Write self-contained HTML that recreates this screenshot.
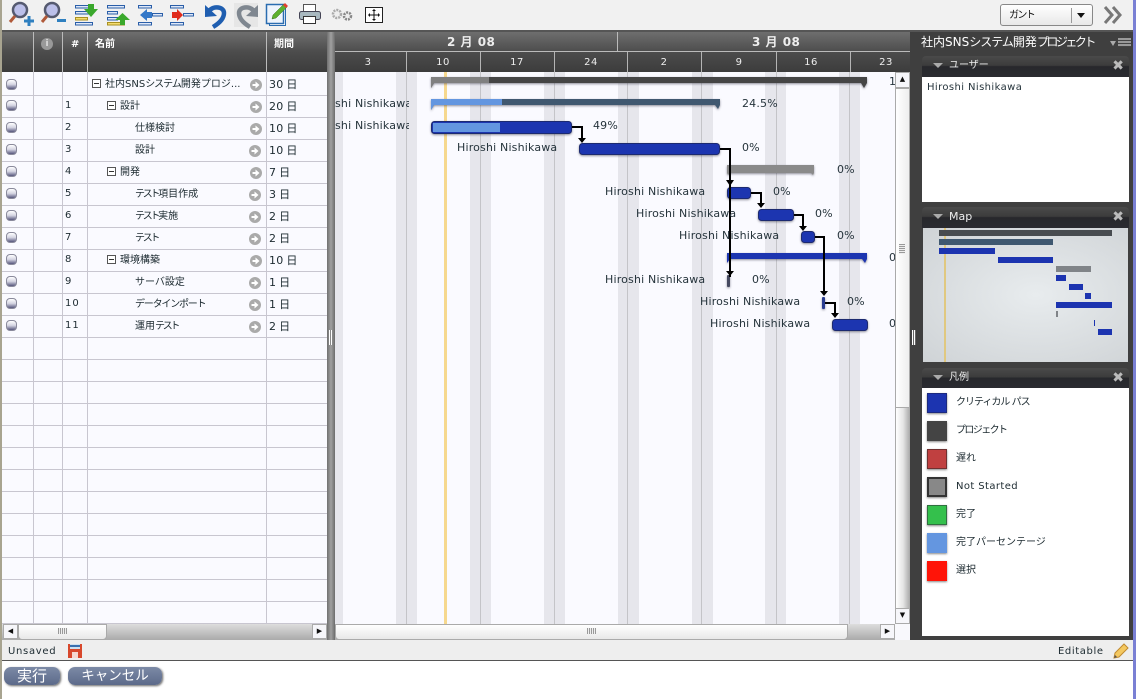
<!DOCTYPE html>
<html lang="ja"><head><meta charset="utf-8"><title>Gantt</title>
<style>
html,body{margin:0;padding:0;background:#fff}
#p{position:relative;width:1136px;height:699px;overflow:hidden;background:#fff;font-family:"DejaVu Sans","WenQuanYi Zen Hei","Noto Sans CJK JP",sans-serif;font-size:10px;color:#1c2a30}
#p div{position:absolute;white-space:nowrap}
.h{background:linear-gradient(#6e6e6e,#4c4c4c 50%,#3c3c3c);}
.t{height:14px;line-height:14px}
.hd{color:#fff;font-weight:bold;top:38px;height:14px;line-height:14px;font-size:10px}
.r{left:2px;width:325px;height:1px;background:#c8c6d0}
.v{top:72px;height:552px;width:1px;background:#c8c6d0}
.s{top:72px;height:552px;width:21px;background:#e6e6ec}
.l{top:72px;height:552px;width:1px;background:#c4c4c8}
.d{top:52px;height:20px;width:1px;background:#b4b4b4}
.dn{top:56px;height:14px;line-height:14px;color:#eee;font-size:10px;width:30px;text-align:center;letter-spacing:.5px}
.rb{left:6px;width:11px;height:11px;border-radius:4px;background:linear-gradient(#fff,#d4d4e2 50%,#56567c);border:1px solid #8a8a9c;box-sizing:border-box}
.ar{left:250px;width:12px;height:12px}
.n{left:65px;font-size:10px;letter-spacing:1px;margin-top:1px}
.nm{font-size:10px;margin-top:1px}
.du{left:269px;font-size:11px;letter-spacing:.3px;word-spacing:-1px;margin-top:1px}
.bx{width:9px;height:9px;border:1px solid #555;box-sizing:border-box;background:#fff}
.bx:after{content:"";position:absolute;left:1px;top:3px;width:5px;height:1px;background:#333}
.lb{font-size:11px;color:#26343c;height:14px;line-height:14px;letter-spacing:.18px;margin-top:1px}
.ph{left:922px;width:207px;height:21px;background:linear-gradient(#4a4a4a,#3c3c3c 45%,#27282c 50%,#2a2b30);border-radius:4px 4px 0 0;color:#eee;font-size:10px;line-height:20px}
.tri{left:11px;top:7px;width:0;height:0;border-left:5px solid transparent;border-right:5px solid transparent;border-top:5px solid #aaa}
.x{right:5px;top:1px;color:#bbb;font-size:14px;font-weight:bold;line-height:18px}
.sw{left:927px;width:20px;height:20px;box-sizing:border-box;box-shadow:0 1px 2px #888}
.lg{left:956px;font-size:10px;height:14px;line-height:14px;margin-top:2px}
.m{height:6px}
.sbb{height:16px;top:624px;background:linear-gradient(#fff,#e4e4e4 45%,#a4a4a4)}
.ab{width:15px;height:15px;background:#f6f6fa;border:1px solid #aaa;box-sizing:border-box;font-size:7px;line-height:13px;text-align:center;color:#111}
.btn{top:667px;height:18px;background:linear-gradient(#7c8aa6,#5c6a8a);border-radius:7px;color:#fff;line-height:18px;text-align:center;box-shadow:1px 1px 2px #666}
.k{letter-spacing:-2.3px}
.k1{letter-spacing:-1.6px}
</style></head><body><div id="p">

<div style="left:0;top:0;width:1133px;height:31px;background:#f1f1f1"></div>
<div style="left:0;top:30px;width:1133px;height:2px;background:#555"></div>
<div style="left:0;top:0;width:2px;height:699px;background:#a8a490"></div>
<div style="left:1133px;top:0;width:3px;height:699px;background:#7a80d4"></div>

<svg style="position:absolute;left:0;top:0" width="400" height="30" viewBox="0 0 400 30">
 <g fill="none">
  <circle cx="20" cy="10" r="7" fill="#bcc0ea" stroke="#555a70" stroke-width="2.500"/><path d="M15 16L10 22" stroke="#b05a3a" stroke-width="3"/><path d="M24 21h10M29 16v10" stroke="#2f80c0" stroke-width="3"/>
  <circle cx="52" cy="10" r="7" fill="#bcc0ea" stroke="#555a70" stroke-width="2.500"/><path d="M47 16L42 22" stroke="#b05a3a" stroke-width="3"/><path d="M57 20.500h9" stroke="#2f80c0" stroke-width="3"/>
 </g>
 <g fill="#dfe8f8" stroke="#2a5ea8">
  <rect x="75.500" y="5.500" width="17" height="2.500"/><rect x="75.500" y="11.500" width="17" height="2.500"/><rect x="75.500" y="17.500" width="12" height="2.500" fill="#f4dc70" stroke="#a89020"/><rect x="75.500" y="22.500" width="17" height="2.500"/>
  <rect x="107.500" y="5.500" width="17" height="2.500"/><rect x="107.500" y="11.500" width="10" height="2.500"/><rect x="107.500" y="17.500" width="10" height="2.500"/><rect x="107.500" y="22.500" width="17" height="2.500" fill="#f4dc70" stroke="#a89020"/>
  <rect x="138.500" y="5.500" width="13" height="2.500"/><rect x="152.500" y="13.500" width="10" height="2.500"/><rect x="138.500" y="22.500" width="13" height="2.500"/>
  <rect x="170.500" y="5.500" width="13" height="2.500"/><rect x="183.500" y="13.500" width="10" height="2.500"/><rect x="170.500" y="22.500" width="13" height="2.500"/>
 </g>
 <path d="M88 4h6v5h4l-7 8-7-8h4z" fill="#3aa82c"/>
 <path d="M120 25v-5h-5l7.500-7 7.500 7h-5v5z" fill="#3aa82c"/>
 <path d="M140 15l7-6v3h5v6h-5v3z" fill="#3478c8"/>
 <path d="M172 12h5V9l6 6-6 6v-3h-5z" fill="#e02c1c"/>
 <path d="M205 5L205 17L217 16z" fill="#1f5eb0"/>
 <path d="M209 11C214 5 224 7 224 13C224 19 218 24 213 27" fill="none" stroke="#1f5eb0" stroke-width="4.500"/>
 <rect x="234" y="3" width="24" height="24" fill="#e6e6e6"/>
 <path d="M258 5L258 17L246 16z" fill="#7f8790"/>
 <path d="M254 11C249 5 239 7 239 13C239 19 245 24 250 27" fill="none" stroke="#7f8790" stroke-width="4.500"/>
 <rect x="269.500" y="6.500" width="16" height="19" fill="#fff" stroke="#2a6cb0"/><rect x="266.500" y="4.500" width="17" height="19" fill="#eef4fc" stroke="#2a6cb0" stroke-width="1.500"/>
 <path d="M272 19l1-4 11-11 3 3-11 11z" fill="#5cb030" stroke="#3a7020" stroke-width=".5"/><path d="M283 5l2-2 3 3-2 2z" fill="#e04030"/>
 <rect x="303.500" y="4.500" width="12" height="7" fill="#fff" stroke="#555"/><rect x="299.500" y="11.500" width="21" height="8" rx="2" fill="#a8b8c0" stroke="#445"/><rect x="303.500" y="16.500" width="12" height="7" fill="#fff" stroke="#333"/>
 <circle cx="337" cy="14" r="4" fill="#eee" stroke="#aaa" stroke-width="2.500" stroke-dasharray="2 1"/><circle cx="347.500" cy="16" r="3.500" fill="#eee" stroke="#888" stroke-width="2.500" stroke-dasharray="2 1"/>
 <rect x="365.500" y="7.500" width="17" height="15" fill="#fff" stroke="#222"/><path d="M374 9v12M368 15h12M372.500 10.500h3M372.500 19.500h3M369.500 13.500v3M378.500 13.500v3" stroke="#111" fill="none"/>
</svg>

<div style="left:1000px;top:4px;width:93px;height:22px;border:1px solid #888;border-radius:3px;box-sizing:border-box;background:linear-gradient(#fff,#e8e8e8)"></div>
<div style="left:1009px;top:9px;font-size:10px;line-height:14px;color:#111"><span class="k1">ガント</span></div>
<div style="left:1071px;top:8px;width:1px;height:15px;background:#999"></div>
<div style="left:1077px;top:13px;width:0;height:0;border-left:4px solid transparent;border-right:4px solid transparent;border-top:5px solid #111"></div>
<svg style="position:absolute;left:1103px;top:5px" width="20" height="20"><path d="M2 2l7 8-7 8M10 2l7 8-7 8" fill="none" stroke="#777" stroke-width="3"/></svg>

<svg width="0" height="0" style="position:absolute"><symbol id="go" viewBox="0 0 12 12"><circle cx="6" cy="6" r="6" fill="#aaa"/><path d="M2.500 5h3V2.500L9.500 6l-4 3.500V7h-3z" fill="#fff"/></symbol></svg>

<!-- Left table -->
<div style="left:2px;top:72px;width:325px;height:552px;background:#fafaff"></div>
<div class="h" style="left:2px;top:32px;width:325px;height:40px"></div>
<div style="left:33px;top:32px;width:1px;height:40px;background:#bbb"></div>
<div style="left:62px;top:32px;width:1px;height:40px;background:#bbb"></div>
<div style="left:87px;top:32px;width:1px;height:40px;background:#bbb"></div>
<div style="left:266px;top:32px;width:1px;height:40px;background:#bbb"></div>
<div style="left:41px;top:38px;width:12px;height:12px;border-radius:50%;background:#999;color:#ddd;font-size:9px;line-height:12px;text-align:center;font-weight:bold">i</div>
<div class="hd" style="left:71px">#</div>
<div class="hd" style="left:95px">名前</div>
<div class="hd" style="left:274px">期間</div>
<div class="v" style="left:33px"></div><div class="v" style="left:62px"></div><div class="v" style="left:87px"></div><div class="v" style="left:266px"></div>
<div class="r" style="top:95px"></div><div class="r" style="top:117px"></div><div class="r" style="top:139px"></div><div class="r" style="top:161px"></div><div class="r" style="top:183px"></div><div class="r" style="top:205px"></div><div class="r" style="top:227px"></div><div class="r" style="top:249px"></div><div class="r" style="top:271px"></div><div class="r" style="top:293px"></div><div class="r" style="top:315px"></div><div class="r" style="top:337px"></div><div class="r" style="top:359px"></div><div class="r" style="top:381px"></div><div class="r" style="top:403px"></div><div class="r" style="top:425px"></div><div class="r" style="top:447px"></div><div class="r" style="top:469px"></div><div class="r" style="top:491px"></div><div class="r" style="top:513px"></div><div class="r" style="top:535px"></div><div class="r" style="top:557px"></div><div class="r" style="top:579px"></div><div class="r" style="top:601px"></div><div class="r" style="top:623px"></div>

<div class="rb" style="top:79px"></div><div class="rb" style="top:100px"></div><div class="rb" style="top:122px"></div><div class="rb" style="top:144px"></div><div class="rb" style="top:166px"></div><div class="rb" style="top:188px"></div><div class="rb" style="top:210px"></div><div class="rb" style="top:232px"></div><div class="rb" style="top:254px"></div><div class="rb" style="top:276px"></div><div class="rb" style="top:298px"></div><div class="rb" style="top:320px"></div>
<svg class="ar" style="position:absolute;top:79px;left:250px" width="12" height="12"><use href="#go"/></svg>
<svg style="position:absolute;top:101px;left:250px" width="12" height="12"><use href="#go"/></svg>
<svg style="position:absolute;top:123px;left:250px" width="12" height="12"><use href="#go"/></svg>
<svg style="position:absolute;top:145px;left:249px" width="12" height="12"><use href="#go"/></svg>
<svg style="position:absolute;top:167px;left:250px" width="12" height="12"><use href="#go"/></svg>
<svg style="position:absolute;top:189px;left:249px" width="12" height="12"><use href="#go"/></svg>
<svg style="position:absolute;top:211px;left:249px" width="12" height="12"><use href="#go"/></svg>
<svg style="position:absolute;top:233px;left:249px" width="12" height="12"><use href="#go"/></svg>
<svg style="position:absolute;top:255px;left:250px" width="12" height="12"><use href="#go"/></svg>
<svg style="position:absolute;top:277px;left:249px" width="12" height="12"><use href="#go"/></svg>
<svg style="position:absolute;top:299px;left:249px" width="12" height="12"><use href="#go"/></svg>
<svg style="position:absolute;top:321px;left:249px" width="12" height="12"><use href="#go"/></svg>

<div class="t n" style="top:98px">1</div><div class="t n" style="top:120px">2</div><div class="t n" style="top:142px">3</div><div class="t n" style="top:164px">4</div><div class="t n" style="top:186px">5</div><div class="t n" style="top:208px">6</div><div class="t n" style="top:230px">7</div><div class="t n" style="top:252px">8</div><div class="t n" style="top:274px">9</div><div class="t n" style="top:296px">10</div><div class="t n" style="top:318px">11</div>

<div class="bx" style="left:92px;top:79px"></div><div class="bx" style="left:107px;top:101px"></div><div class="bx" style="left:107px;top:167px"></div><div class="bx" style="left:107px;top:255px"></div>
<div class="t nm" style="left:105px;top:77px">社内SNS<span style="letter-spacing:-1px">システム</span>開発プロジ...</div>
<div class="t nm" style="left:120px;top:99px">設計</div>
<div class="t nm" style="left:135px;top:121px">仕様検討</div>
<div class="t nm" style="left:135px;top:143px">設計</div>
<div class="t nm" style="left:120px;top:165px">開発</div>
<div class="t nm" style="left:135px;top:187px"><span class="k">テスト</span>項目作成</div>
<div class="t nm" style="left:135px;top:209px"><span class="k">テスト</span>実施</div>
<div class="t nm" style="left:135px;top:231px"><span class="k">テスト</span></div>
<div class="t nm" style="left:120px;top:253px">環境構築</div>
<div class="t nm" style="left:135px;top:275px">サーバ設定</div>
<div class="t nm" style="left:135px;top:297px"><span style="letter-spacing:-1.200px">データインポート</span></div>
<div class="t nm" style="left:135px;top:319px">運用<span class="k">テスト</span></div>

<div class="t du" style="top:77px">30 日</div><div class="t du" style="top:99px">20 日</div><div class="t du" style="top:121px">10 日</div><div class="t du" style="top:143px">10 日</div><div class="t du" style="top:165px">7 日</div><div class="t du" style="top:187px">3 日</div><div class="t du" style="top:209px">2 日</div><div class="t du" style="top:231px">2 日</div><div class="t du" style="top:253px">10 日</div><div class="t du" style="top:275px">1 日</div><div class="t du" style="top:297px">1 日</div><div class="t du" style="top:319px">2 日</div>

<!-- Left scrollbar -->
<div style="left:2px;top:624px;width:325px;height:16px;background:linear-gradient(#ddd,#aaa)"></div>
<div class="ab" style="left:3px;top:624px">◀</div>
<div class="sbb" style="left:18px;width:89px;border:1px solid #aaa;border-radius:0 0 4px 4px;box-sizing:border-box;background:linear-gradient(#fff,#e8e8e8)"></div>
<div style="left:58px;top:628px;width:9px;height:6px;background:repeating-linear-gradient(90deg,#999 0 1px,#eee 1px 2px)"></div>
<div class="ab" style="left:312px;top:624px">▶</div>

<!-- Splitter -->
<div style="left:327px;top:32px;width:8px;height:608px;background:linear-gradient(90deg,#707070,#a0a0a0 50%,#6c6c6c)"></div>
<div style="left:329px;top:330px;width:4px;height:15px;background:repeating-linear-gradient(90deg,#fff 0 1px,#888 1px 2px)"></div>

<!-- Chart -->
<div style="left:335px;top:72px;width:560px;height:552px;background:#fafaff"></div>
<div class="h" style="left:335px;top:32px;width:575px;height:40px"></div>
<div style="left:335px;top:51px;width:575px;height:1px;background:#bbb"></div>
<div style="left:617px;top:32px;width:1px;height:19px;background:#bbb"></div>
<div style="left:447px;top:35px;font-size:12px;font-weight:bold;color:#eee;line-height:15px;letter-spacing:.5px">2 月 08</div>
<div style="left:752px;top:35px;font-size:12px;font-weight:bold;color:#eee;line-height:15px;letter-spacing:.5px">3 月 08</div>
<div class="d" style="left:406px"></div><div class="d" style="left:480px"></div><div class="d" style="left:554px"></div><div class="d" style="left:627px"></div><div class="d" style="left:701px"></div><div class="d" style="left:776px"></div><div class="d" style="left:850px"></div>
<div class="dn" style="left:353px">3</div><div class="dn" style="left:428px">10</div><div class="dn" style="left:502px">17</div><div class="dn" style="left:576px">24</div><div class="dn" style="left:649px">2</div><div class="dn" style="left:724px">9</div><div class="dn" style="left:796px">16</div><div class="dn" style="left:871px">23</div>

<div class="s" style="left:335px;width:8px"></div><div class="s" style="left:396px"></div><div class="s" style="left:470px"></div><div class="s" style="left:544px"></div><div class="s" style="left:618px"></div><div class="s" style="left:692px"></div><div class="s" style="left:765px"></div><div class="s" style="left:839px"></div>
<div class="l" style="left:406px"></div><div class="l" style="left:480px"></div><div class="l" style="left:554px"></div><div class="l" style="left:627px"></div><div class="l" style="left:701px"></div><div class="l" style="left:776px"></div><div class="l" style="left:849px"></div>
<div style="left:444px;top:72px;width:3px;height:552px;background:#f6d88e"></div>

<svg style="position:absolute;left:335px;top:72px" width="560" height="552" viewBox="335 72 560 552">
 <defs><filter id="f" x="-10%" y="-30%" width="120%" height="170%"><feDropShadow dx="0" dy="1" stdDeviation="1" flood-color="#445" flood-opacity=".6"/></filter></defs>
 <g filter="url(#f)">
  <path d="M431 77h436v6l-3 5-3-5H434l-3 5z" fill="#444"/><path d="M431 77h58v6h-55l-3 5z" fill="#808080"/>
  <path d="M431 99h289v6l-2 4-3-4H434l-3 5z" fill="#3f5870"/><path d="M431 99h71v6h-68l-3 5z" fill="#6496e0"/>
  <rect x="431.500" y="121.500" width="140" height="12" rx="3" fill="#1c34b0" stroke="#1c2a70"/>
  <rect x="433" y="123" width="67" height="9" fill="#6496e0"/>
  <rect x="579.500" y="143.500" width="140" height="11" rx="3" fill="#1c34b0" stroke="#1c2a70"/>
  <rect x="727" y="165" width="87" height="8" fill="#8a8a8a"/><path d="M727 173h3l-2 2zM814 173h-3l2 2z" fill="#8a8a8a"/>
  <rect x="727.500" y="187.500" width="23" height="11" rx="3" fill="#1c34b0" stroke="#1c2a70"/>
  <rect x="758.500" y="209.500" width="35" height="11" rx="3" fill="#1c34b0" stroke="#1c2a70"/>
  <rect x="801.500" y="231.500" width="13" height="11" rx="3" fill="#1c34b0" stroke="#1c2a70"/>
  <path d="M727 253h140v6l-2 4-3-4H730l-3 4z" fill="#1c34b0"/>
  <rect x="727" y="275" width="3" height="12" rx="1" fill="#444a60"/>
  <rect x="822" y="297" width="3" height="12" rx="1" fill="#2a3c90"/>
  <rect x="832.500" y="319.500" width="35" height="11" rx="3" fill="#1c34b0" stroke="#1c2a70"/>
 </g>
 <g fill="none" stroke="#000" stroke-width="2">
  <path d="M572 127h10v12"/>
  <path d="M720 149h10v32"/>
  <path d="M730 181v96"/>
  <path d="M751 193h10v11"/>
  <path d="M794 215h9v12"/>
  <path d="M815 237h9v55"/>
  <path d="M825 303h10v11"/>
 </g>
 <g fill="#000">
  <path d="M578 138h8l-4 5z"/><path d="M726 180h8l-4 6z"/><path d="M726 271h8l-4 5z"/><path d="M757 203h8l-4 5z"/><path d="M799 226h8l-4 5z"/><path d="M820 291h8l-4 5z"/><path d="M831 313h8l-4 5z"/>
 </g>
</svg>

<div class="lb" style="left:335px;top:96px;width:74px;overflow:hidden;text-align:right">shi Nishikawa</div>
<div class="lb" style="left:335px;top:118px;width:74px;overflow:hidden;text-align:right">shi Nishikawa</div>
<div class="lb" style="left:457px;top:140px">Hiroshi Nishikawa</div>
<div class="lb" style="left:605px;top:184px">Hiroshi Nishikawa</div>
<div class="lb" style="left:636px;top:206px">Hiroshi Nishikawa</div>
<div class="lb" style="left:679px;top:228px">Hiroshi Nishikawa</div>
<div class="lb" style="left:605px;top:272px">Hiroshi Nishikawa</div>
<div class="lb" style="left:700px;top:294px">Hiroshi Nishikawa</div>
<div class="lb" style="left:710px;top:316px">Hiroshi Nishikawa</div>
<div class="lb" style="left:889px;top:74px;width:6px;overflow:hidden">1</div>
<div class="lb" style="left:742px;top:96px">24.5%</div>
<div class="lb" style="left:593px;top:118px">49%</div>
<div class="lb" style="left:742px;top:140px">0%</div>
<div class="lb" style="left:837px;top:162px">0%</div>
<div class="lb" style="left:773px;top:184px">0%</div>
<div class="lb" style="left:815px;top:206px">0%</div>
<div class="lb" style="left:837px;top:228px">0%</div>
<div class="lb" style="left:889px;top:250px;width:6px;overflow:hidden">0</div>
<div class="lb" style="left:752px;top:272px">0%</div>
<div class="lb" style="left:847px;top:294px">0%</div>
<div class="lb" style="left:889px;top:316px;width:6px;overflow:hidden">0</div>

<!-- Chart scrollbars -->
<div style="left:895px;top:72px;width:15px;height:552px;background:linear-gradient(90deg,#fff,#e6e6e6 50%,#a8a8a8);border-left:1px solid #aaa;box-sizing:border-box"></div>
<div style="left:895px;top:88px;width:15px;height:320px;background:linear-gradient(90deg,#fff,#eee);border:1px solid #aaa;box-sizing:border-box"></div>
<div style="left:899px;top:244px;width:6px;height:10px;background:repeating-linear-gradient(#999 0 1px,#eee 1px 2px)"></div>
<div class="ab" style="left:895px;top:72px;height:16px">▲</div>
<div class="ab" style="left:895px;top:608px;height:16px">▼</div>
<div style="left:335px;top:624px;width:560px;height:16px;background:linear-gradient(#ddd,#aaa)"></div>
<div class="sbb" style="left:335px;width:513px;border:1px solid #aaa;border-radius:0 0 4px 4px;box-sizing:border-box;background:linear-gradient(#fff,#e8e8e8)"></div>
<div style="left:587px;top:628px;width:9px;height:6px;background:repeating-linear-gradient(90deg,#999 0 1px,#eee 1px 2px)"></div>
<div class="ab" style="left:880px;top:624px">▶</div>
<div style="left:895px;top:624px;width:15px;height:16px;background:#f8f8fc"></div>

<!-- Right panel -->
<div style="left:910px;top:32px;width:223px;height:608px;background:#3f3f3f"></div>
<div style="left:921px;top:34px;font-size:12px;line-height:17px;color:#fff">社内SNS<span style="letter-spacing:-1px">システム</span>開発<span style="letter-spacing:-2.500px">プロジェクト</span></div>
<div style="left:1110px;top:41px;width:0;height:0;border-left:3px solid transparent;border-right:3px solid transparent;border-top:5px solid #aaa"></div>
<div style="left:1118px;top:38px;width:13px;height:9px;background:repeating-linear-gradient(#999 0 2px,#444 2px 3px)"></div>

<div class="ph" style="top:56px"><div class="tri"></div><div style="left:27px;top:0">ユーザー</div><div class="x">✖</div></div>
<div style="left:922px;top:77px;width:207px;height:125px;background:#fff"></div>
<div style="left:927px;top:80px;margin-top:1px;font-size:10px;line-height:14px;letter-spacing:.4px;color:#26343c">Hiroshi Nishikawa</div>

<div class="ph" style="top:207px"><div class="tri"></div><div style="left:27px;top:0;font-size:11px">Map</div><div class="x">✖</div></div>
<div style="left:923px;top:228px;width:205px;height:134px;background:radial-gradient(ellipse at 55% 50%,#e8ecee,#cfd3d6)"></div>
<div style="left:944px;top:228px;width:2px;height:134px;background:#e0c880"></div>
<div class="m" style="left:939px;top:230px;width:173px;background:#484c50"></div>
<div class="m" style="left:939px;top:239px;width:114px;background:#3f5870"></div>
<div class="m" style="left:939px;top:248px;width:56px;background:#1c34b0"></div>
<div class="m" style="left:998px;top:257px;width:55px;background:#1c34b0"></div>
<div class="m" style="left:1056px;top:266px;width:35px;background:#808488"></div>
<div class="m" style="left:1056px;top:275px;width:10px;background:#1c34b0"></div>
<div class="m" style="left:1069px;top:284px;width:14px;background:#1c34b0"></div>
<div class="m" style="left:1085px;top:293px;width:6px;background:#1c34b0"></div>
<div class="m" style="left:1056px;top:302px;width:56px;background:#1c34b0"></div>
<div class="m" style="left:1056px;top:311px;width:2px;background:#808488"></div>
<div class="m" style="left:1094px;top:320px;width:1px;background:#1c34b0"></div>
<div class="m" style="left:1098px;top:329px;width:14px;background:#1c34b0"></div>

<div class="ph" style="top:368px;height:20px"><div class="tri"></div><div style="left:27px;top:0">凡例</div><div class="x">✖</div></div>
<div style="left:922px;top:388px;width:207px;height:248px;background:#fff"></div>
<div class="sw" style="top:393px;background:#1c34b0;border:1px solid #1c2a80"></div><div class="lg" style="top:394px"><span style="letter-spacing:-1px">クリティカル パス</span></div>
<div class="sw" style="top:421px;background:#444"></div><div class="lg" style="top:422px"><span class="k1">プロジェクト</span></div>
<div class="sw" style="top:449px;background:#c04040;border:1px solid #703030"></div><div class="lg" style="top:450px">遅れ</div>
<div class="sw" style="top:477px;background:#888;border:2px solid #333"></div><div class="lg" style="top:478px;letter-spacing:.4px">Not Started</div>
<div class="sw" style="top:505px;background:#34c04c;border:1px solid #307040"></div><div class="lg" style="top:506px">完了</div>
<div class="sw" style="top:533px;background:#6496e0"></div><div class="lg" style="top:534px">完了パーセンテージ</div>
<div class="sw" style="top:561px;background:#ff1408"></div><div class="lg" style="top:562px">選択</div>

<div style="left:912px;top:330px;width:4px;height:15px;background:repeating-linear-gradient(90deg,#fff 0 1px,#666 1px 2px)"></div>

<!-- Status -->
<div style="left:2px;top:640px;width:1131px;height:20px;background:#eee"></div>
<div style="left:2px;top:660px;width:1131px;height:1px;background:#555"></div>
<div style="left:8px;top:645px;font-size:10px;line-height:14px;letter-spacing:.7px">Unsaved</div>
<svg style="position:absolute;left:68px;top:644px" width="14" height="14"><rect width="14" height="14" fill="#d8482c"/><rect x="2" width="10" height="5" fill="#cfe0f0"/><rect y="1" x="2" width="10" height="2" fill="#3a70b0"/><rect x="4" y="8" width="6" height="6" fill="#f4d8d0"/></svg>
<div style="left:1058px;top:645px;font-size:10px;line-height:14px;letter-spacing:.6px">Editable</div>
<svg style="position:absolute;left:1113px;top:643px" width="16" height="16"><path d="M1 15l1-5L11 1l4 4-9 9z" fill="#f4c860" stroke="#c08a30"/><path d="M1 15l1-3 2 2z" fill="#555"/></svg>

<div class="btn" style="left:4px;width:56px;font-size:15px">実行</div>
<div class="btn" style="left:68px;width:94px;font-size:13.500px">キャンセル</div>

</div></body></html>
